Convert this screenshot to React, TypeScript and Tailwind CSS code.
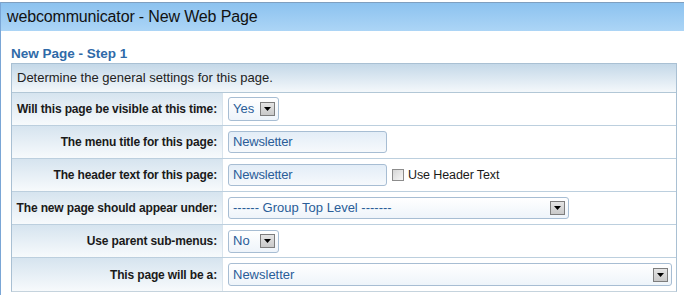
import React from "react";

function Arrow() {
  return (
    <div className="flex h-[14px] w-[15px] items-center justify-center border border-[#7d7d7d] bg-gradient-to-b from-[#e4e4e4] to-[#c9c9c9]">
      <svg width="7" height="4" viewBox="0 0 7 4">
        <polygon points="0,0 7,0 3.5,4" fill="#000" />
      </svg>
    </div>
  );
}

function Select({ value, w, h = 23 }: { value: string; w: number; h?: number }) {
  return (
    <div
      className="flex items-center justify-between rounded-[3px] border border-[#a7bdd3] bg-gradient-to-b from-white to-[#eef4fa] pl-[4px] pr-[3px] text-[13px] text-[#2a5d98]"
      style={{ width: w, height: h }}
    >
      <span className="whitespace-nowrap">{value}</span>
      <Arrow />
    </div>
  );
}

function Input({ value }: { value: string }) {
  return (
    <div className="flex h-[22px] w-[159px] items-center rounded-[3px] border border-[#a7bdd3] bg-gradient-to-b from-[#e3edf7] to-[#f6f9fc] pl-[4px] text-[13px] tracking-[-0.2px] text-[#2a5d98]">
      {value}
    </div>
  );
}

function Row({ label, children, last }: { label: string; children: React.ReactNode; last?: boolean }) {
  return (
    <div className={`flex h-[33px] ${last ? "" : "border-b border-[#bccfde]"}`}>
      <div className="flex w-[211px] items-center justify-end whitespace-nowrap border-r border-[#d9e4ec] bg-gradient-to-b from-[#d6e4ef] to-[#f7fafc] pr-[5px] text-[12px] font-bold tracking-[-0.15px] text-[#1a1a1a]">
        {label}
      </div>
      <div className="flex flex-1 items-center bg-white pl-[5px]">{children}</div>
    </div>
  );
}

export default function App() {
  return (
    <div className="h-[295px] w-[684px] overflow-hidden bg-white font-['Liberation_Sans',Arial,sans-serif]">
      <div className="h-full border-l border-[#7aa6d6]">
        <div className="mt-[2px] h-[29px] border-t border-[#7f9fbf] bg-gradient-to-b from-[#8cc2ef] to-[#acd5f6] pl-[6px] text-[16px] leading-[27px] tracking-[-0.15px] text-[#111]">
          webcommunicator - New Web Page
        </div>
        <div className="pl-[10px] pt-[15px]">
          <div className="h-[17px] text-[13.5px] font-bold leading-[15px] text-[#2f6aa8]">New Page - Step 1</div>
          <div className="w-[666px] border border-[#a9c0d3] border-b-[#c5d3dd]">
            <div className="flex h-[29px] items-center border-b border-[#b2c7d6] bg-gradient-to-b from-[#c4d8e8] to-[#f4f8fb] pl-[5px] text-[13px] text-[#222]">
              Determine the general settings for this page.
            </div>
            <Row label="Will this page be visible at this time:">
              <Select value="Yes" w={51} h={24} />
            </Row>
            <Row label="The menu title for this page:">
              <Input value="Newsletter" />
            </Row>
            <Row label="The header text for this page:">
              <Input value="Newsletter" />
              <div className="ml-[5px] h-[12px] w-[12px] border border-[#8c8c8c] bg-gradient-to-br from-[#d6d6d6] to-[#f7f7f7]" />
              <span className="ml-[4px] text-[12.5px] tracking-[-0.1px] text-[#1a1a1a]">Use Header Text</span>
            </Row>
            <Row label="The new page should appear under:">
              <Select value="------ Group Top Level -------" w={341} h={22} />
            </Row>
            <Row label="Use parent sub-menus:">
              <Select value="No" w={51} h={23} />
            </Row>
            <Row label="This page will be a:" last>
              <Select value="Newsletter" w={444} h={23} />
            </Row>
          </div>
        </div>
      </div>
    </div>
  );
}
